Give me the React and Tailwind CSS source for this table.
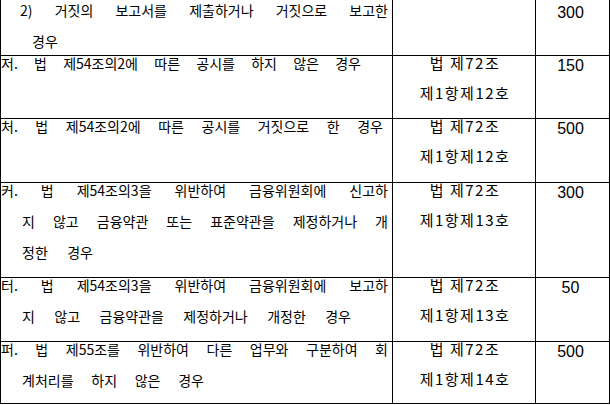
import React from "react";

const rows = [
  {
    h: "h-[56px]",
    pt: "pt-[3px]",
    lines: [
      { t: "2) 거짓의 보고서를 제출하거나 거짓으로 보고한", c: "ml-[19px] w-[368px]" },
      { t: "경우", c: "ml-[31px] w-[40px]" },
    ],
    law: [],
    amt: "300",
  },
  {
    h: "h-[63px]",
    pt: "pt-0",
    lines: [{ t: "저. 법 제54조의2에 따른 공시를 하지 않은 경우", c: "ml-0 w-[360px]" }],
    law: ["법 제72조", "제1항제12호"],
    amt: "150",
  },
  {
    h: "h-[64px]",
    pt: "pt-0",
    lines: [{ t: "처. 법 제54조의2에 따른 공시를 거짓으로 한 경우", c: "ml-0 w-[382px]" }],
    law: ["법 제72조", "제1항제12호"],
    amt: "500",
  },
  {
    h: "h-[95px]",
    pt: "pt-0",
    lines: [
      { t: "커. 법 제54조의3을 위반하여 금융위원회에 신고하", c: "ml-0 w-[387px]" },
      { t: "지 않고 금융약관 또는 표준약관을 제정하거나 개", c: "ml-[21px] w-[366px]" },
      { t: "정한 경우", c: "ml-[21px] w-[71px]" },
    ],
    law: ["법 제72조", "제1항제13호"],
    amt: "300",
  },
  {
    h: "h-[64px]",
    pt: "pt-0",
    lines: [
      { t: "터. 법 제54조의3을 위반하여 금융위원회에 보고하", c: "ml-0 w-[387px]" },
      { t: "지 않고 금융약관을 제정하거나 개정한 경우", c: "ml-[21px] w-[329px]" },
    ],
    law: ["법 제72조", "제1항제13호"],
    amt: "50",
  },
  {
    h: "h-[62px]",
    pt: "pt-0",
    lines: [
      { t: "퍼. 법 제55조를 위반하여 다른 업무와 구분하여 회", c: "ml-0 w-[387px]" },
      { t: "계처리를 하지 않은 경우", c: "ml-[21px] w-[182px]" },
    ],
    law: ["법 제72조", "제1항제14호"],
    amt: "500",
  },
];

export default function App() {
  return (
    <div className="w-[610px] h-[405px] bg-white text-black font-['Noto_Sans_CJK_KR',sans-serif] text-[14px]">
      {rows.map((r, i) => (
        <div key={i} className={`flex border-b border-black ${r.h}`}>
          <div className={`w-[393px] border-l border-r border-black ${r.pt}`}>
            {r.lines.map((l, j) => (
              <div
                key={j}
                className={`h-[31px] leading-[14px] text-justify [text-align-last:justify] ${l.c}`}
              >
                {l.t}
              </div>
            ))}
          </div>
          <div className={`w-[143px] border-r border-black ${r.pt}`}>
            {r.law.map((l, j) => (
              <div key={j} className="h-[30px] leading-[14px] text-center text-[15px] tracking-[1.5px] pl-[2px]">
                {l}
              </div>
            ))}
          </div>
          <div className={`w-[74px] border-r border-black ${r.pt}`}>
            <div className="leading-[18px] pt-[1px] pr-[4px] text-center text-[16px] font-['Liberation_Sans',sans-serif]">
              {r.amt}
            </div>
          </div>
        </div>
      ))}
    </div>
  );
}
